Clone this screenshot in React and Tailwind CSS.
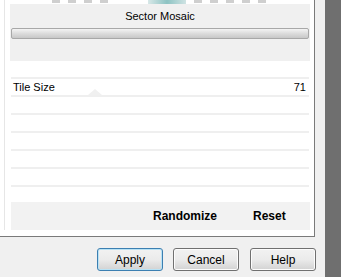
import React from "react";

const lines = [0, 1, 2, 3, 4];

export default function App() {
  return (
    <div className="flex h-[277px] w-[341px] bg-[#f0f0f0] font-['Liberation_Sans',Arial,sans-serif]">
      <div className="flex w-[325px] flex-col">
        <div className="flex h-[237px] w-[315px] border-b border-r border-[#7a7a7a] bg-white">
          <div className="ml-[4px] mb-[6px] w-[6px] border-l border-[#e6e6e6]" />
          <div className="flex w-[300px] flex-col">
            {/* preview edge */}
            <div className="flex h-[4px] items-start">
              <div className="ml-[42px] flex gap-[8px]">
                <div className="h-[3px] w-[8px] bg-[#cfcfcf]" />
                <div className="h-[3px] w-[8px] bg-[#cfcfcf]" />
                <div className="h-[3px] w-[8px] bg-[#cfcfcf]" />
                <div className="h-[3px] w-[8px] bg-[#cfcfcf]" />
              </div>
              <div className="ml-[40px] h-[4px] w-[38px] bg-gradient-to-r from-[#d8e8e8] via-[#8dc3c3] to-[#cfe3e3]" />
              <div className="ml-[8px] flex gap-[8px]">
                <div className="h-[3px] w-[8px] bg-[#cfcfcf]" />
                <div className="h-[3px] w-[8px] bg-[#cfcfcf]" />
                <div className="h-[3px] w-[8px] bg-[#cfcfcf]" />
                <div className="h-[3px] w-[8px] bg-[#cfcfcf]" />
                <div className="h-[3px] w-[8px] bg-[#cfcfcf]" />
              </div>
            </div>
            {/* title panel */}
            <div className="flex h-[57px] flex-col bg-[#f0f0f0]">
              <div className="pt-[5px] text-center text-[11px] leading-[14px] text-black">
                Sector Mosaic
              </div>
              <div className="mx-[1px] mt-[5px] h-[11px] rounded-[2px] border border-[#a8a8a8] bg-gradient-to-b from-[#f4f4f4] via-[#dcdcdc] to-[#c8c8c8]" />
            </div>
            {/* parameter list */}
            <div className="flex flex-col pt-[16px]">
              <div className="mx-[1px] h-[2px] bg-[#efefef]" />
              <div className="relative flex h-[16px] items-center justify-between pl-[3px] pr-[4px] text-[11px] text-black">
                <span>Tile Size</span>
                <span>71</span>
                <div className="absolute bottom-0 left-[78px] h-0 w-0 border-x-[7px] border-b-[6px] border-x-transparent border-b-[#f0f0f0]" />
              </div>
              {lines.map((r) => (
                <div key={r} className="flex h-[18px] flex-col">
                  <div className="mx-[1px] h-[2px] bg-[#efefef]" />
                </div>
              ))}
              <div className="mx-[1px] h-[2px] bg-[#efefef]" />
            </div>
            {/* action bar */}
            <div className="ml-[1px] mt-[15px] flex h-[28px] items-center bg-[#f2f2f2] pl-[142px] text-[12px] font-bold text-black">
              <span>Randomize</span>
              <span className="ml-[36px]">Reset</span>
            </div>
          </div>
        </div>
        <div className="flex gap-[10px] pl-[97px] pt-[11px] text-[12px] text-black">
          <button className="h-[23px] w-[66px] rounded-[3px] border border-[#3c7fb1] bg-gradient-to-b from-[#f2f2f2] via-[#ebebeb] to-[#d2d2d2] shadow-[inset_0_0_0_1px_#b8e2f5]">
            Apply
          </button>
          <button className="h-[23px] w-[66px] rounded-[3px] border border-[#707070] bg-gradient-to-b from-[#f2f2f2] via-[#ebebeb] to-[#d2d2d2] shadow-[inset_0_0_0_1px_#fcfcfc]">
            Cancel
          </button>
          <button className="ml-[1px] h-[23px] w-[66px] rounded-[3px] border border-[#707070] bg-gradient-to-b from-[#f2f2f2] via-[#ebebeb] to-[#d2d2d2] shadow-[inset_0_0_0_1px_#fcfcfc]">
            Help
          </button>
        </div>
      </div>
      <div className="w-[16px] bg-[#6f6f6f]" />
    </div>
  );
}
